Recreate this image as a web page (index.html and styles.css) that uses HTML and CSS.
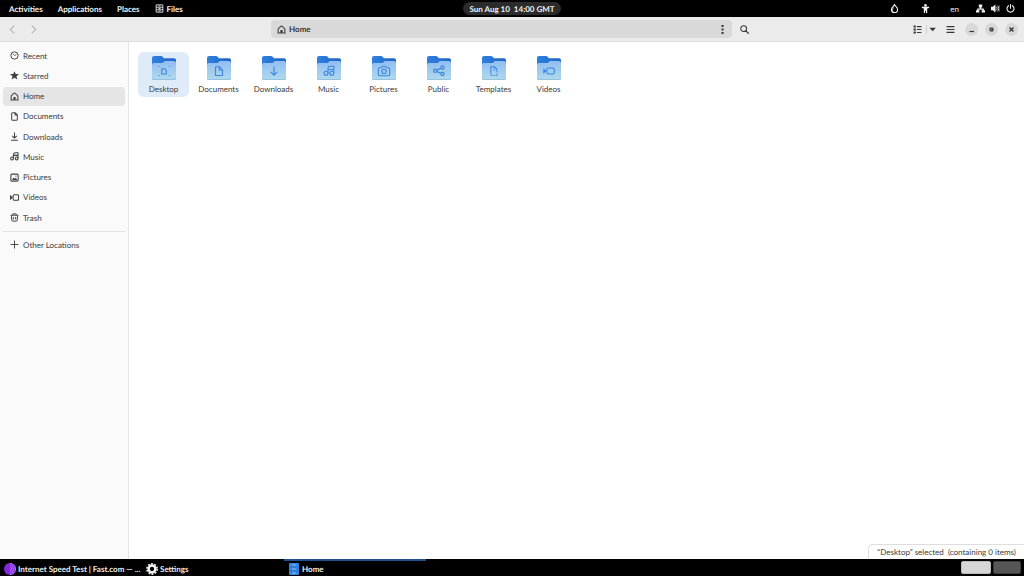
FILE: index.html
```html
<!DOCTYPE html>
<html lang="en">
<head>
<meta charset="utf-8">
<title>Home - Files</title>
<link rel="stylesheet" href="styles.css">
</head>
<body>
<svg class="defs" aria-hidden="true">
  <defs>
    <linearGradient id="folder-front" x1="0" y1="0" x2="0" y2="1">
      <stop offset="0" stop-color="#91bdf3"/><stop offset="1" stop-color="#b0daea"/>
    </linearGradient>
    <linearGradient id="folder-back" x1="0" y1="0" x2="1" y2="0">
      <stop offset="0" stop-color="#2f80e0"/><stop offset="1" stop-color="#1f65c4"/>
    </linearGradient>
    <symbol id="home" viewBox="0 0 16 16"><path d="M2 14.200V7.500q0-.7.500-1.200L7.300 2q.7-.6 1.400 0l4.800 4.300q.5.500.5 1.200v6.700M.8 14.200H6M10 14.200h5.200" fill="none" stroke="currentColor" stroke-width="1.800" stroke-linejoin="round"/><path d="M6 15V10q0-1 1-1h2q1 0 1 1v5z" fill="currentColor"/></symbol>
    <symbol id="doc" viewBox="0 0 16 16"><path d="M3 3q0-1.500 1.500-1.500h5L13 5v8q0 1.500-1.500 1.500h-7Q3 14.500 3 13zM9 2v3.500h3.500" fill="none" stroke="currentColor" stroke-width="1.800" stroke-linejoin="round"/></symbol>
    <symbol id="down" viewBox="0 0 16 16"><path d="M8 1v9M4 6.800l4 4 4-4M2 14.500h12" fill="none" stroke="currentColor" stroke-width="1.800"/></symbol>
    <symbol id="music" viewBox="0 0 16 16"><g fill="none" stroke="currentColor" stroke-width="1.800"><circle cx="3.600" cy="11.500" r="2.500"/><circle cx="11.800" cy="11.500" r="2.500"/><path d="M6.100 11.500V5.500q0-4 4-4h4.200v10M6.100 6h8"/></g></symbol>
    <symbol id="video" viewBox="0 0 16 16"><rect x="5.500" y="3" width="9.700" height="10" rx="2.500" fill="none" stroke="currentColor" stroke-width="1.900"/><path d="M0 3 5 8 0 13z" fill="currentColor"/></symbol>
    <symbol id="folder" viewBox="0 0 24 24"><path d="M0 2Q0 0 2 0h7q1 0 1.600.8L12 2.300h10q2 0 2 2V22H0z" fill="url(#folder-back)"/><path d="M0 9q0-2 2-2h8q1 0 1.600-.7L12 5.500q.5-.5 1.300-.5H22q2 0 2 2v15q0 2-2 2H2q-2 0-2-2z" fill="url(#folder-front)"/><path d="M.3 22q0 1.700 1.700 1.700h20q1.700 0 1.700-1.700" fill="none" stroke="#83afd9" stroke-width=".7"/></symbol>
  </defs>
</svg>

<div class="desktop">
  <header class="topbar">
    <nav class="topbar-menus">
      <button>Activities</button>
      <button>Applications</button>
      <button>Places</button>
      <button class="app-menu"><svg class="icon" viewBox="0 0 16 16"><path d="M2 1.500h12v13H2zM2 5.800h12M2 10.200h12M6 3.500h4M6 8h4M6 12.300h4" fill="none" stroke="currentColor" stroke-width="1.500"/></svg>Files</button>
    </nav>
    <button class="clock"><span>Sun Aug 10</span><span>14:00 GMT</span></button>
    <div class="indicators">
      <button aria-label="Brightness"><svg class="icon" viewBox="0 0 16 16"><path d="M8 1.200c1 2.700 5.500 4.500 5.500 8.500a5.500 5.500 0 0 1-11 0c0-4 4.500-5.800 5.500-8.500z" fill="none" stroke="currentColor" stroke-width="1.900"/><path d="M8 3c-1 3-4 4-4 7q0 2 1.500 3Q5 8 8 3z" fill="currentColor"/></svg></button>
      <button class="access" aria-label="Accessibility"><svg class="icon" viewBox="0 0 16 16"><circle cx="8" cy="2.500" r="2.300" fill="currentColor"/><path d="M1.500 5h13v2L11 8v8H8.800v-4H7.200v4H5V8L1.500 7z" fill="currentColor"/></svg></button>
      <button class="lang">en</button>
      <button class="system" aria-label="System menu">
        <svg class="icon" viewBox="0 0 16 16"><path d="M5 1h6v5H9v2h5v3h2v4h-6v-4h2v-1H4v1h2v4H0v-4h2V8h5V6H5z" fill="currentColor"/></svg>
        <svg class="icon" viewBox="0 0 16 16"><path d="M0 5h3l5-4v14l-5-4H0z" fill="currentColor"/><path d="M10 5q2 3 0 6M12 3q3.500 5 0 10" fill="none" stroke="currentColor" stroke-width="1.500"/><path d="M14 1.500q4 6.500 0 13" fill="none" stroke="#777" stroke-width="1.300"/></svg>
        <svg class="icon" viewBox="0 0 16 16"><path d="M4.500 3a6.300 6.300 0 1 0 7 0M8 1v6.500" fill="none" stroke="currentColor" stroke-width="1.900" stroke-linecap="round"/></svg>
      </button>
    </div>
  </header>

  <main class="window">
    <header class="headerbar">
      <div class="history">
        <button aria-label="Back" disabled><svg class="icon" viewBox="0 0 16 16"><path d="M11 1 4 8l7 7" fill="none" stroke="currentColor" stroke-width="1.900"/></svg></button>
        <button aria-label="Forward" disabled><svg class="icon" viewBox="0 0 16 16"><path d="m5 1 7 7-7 7" fill="none" stroke="currentColor" stroke-width="1.900"/></svg></button>
      </div>
      <div class="pathbar">
        <button class="crumb"><svg class="icon"><use href="#home"/></svg>Home</button>
        <button aria-label="Folder menu"><svg class="icon" viewBox="0 0 16 16"><path d="M6.300 0h3.600v3.600H6.300zM6.300 6.200h3.600v3.600H6.300zM6.300 12.400h3.600V16H6.300z" fill="currentColor"/></svg></button>
      </div>
      <div class="tools">
        <button aria-label="Search"><svg class="icon" viewBox="0 0 16 16"><circle cx="6.500" cy="6.500" r="5.200" fill="none" stroke="currentColor" stroke-width="1.900"/><path d="m10 10 5.300 5.300" stroke="currentColor" stroke-width="2.200"/></svg></button>
        <div class="view-controls">
          <button aria-label="List view"><svg class="icon" viewBox="0 0 16 16"><path d="M1 1h4v3.500H1zM1 6.300h4v3.500H1zM1 11.600h4V15H1zM7 1.800h8v2H7zM7 7h8v2H7zM7 12.300h8v2H7z" fill="currentColor"/></svg></button>
          <button class="view-more" aria-label="View options"><svg class="icon" viewBox="0 0 16 16"><path d="M2.500 5h11.500L8.300 11z" fill="currentColor"/></svg></button>
          <button class="main-menu" aria-label="Main menu"><svg class="icon" viewBox="0 0 16 16"><path d="M1 2.700h14M1 8h14M1 13.300h14" stroke="currentColor" stroke-width="2.200"/></svg></button>
        </div>
        <div class="window-controls">
          <button aria-label="Minimize"><svg viewBox="0 0 13 13"><path d="M4.500 8.500h4.500" stroke="currentColor" stroke-width="1.200"/></svg></button>
          <button aria-label="Restore"><svg viewBox="0 0 13 13"><path d="M5 5h3v3H5z" fill="#777" stroke="currentColor"/></svg></button>
          <button aria-label="Close"><svg viewBox="0 0 13 13"><path d="m4.500 4.500 4 4m0-4-4 4" stroke="currentColor" stroke-width="1.400"/></svg></button>
        </div>
      </div>
    </header>

    <div class="content">
      <nav class="sidebar" aria-label="Places">
        <div class="places">
          <a href="#recent"><svg class="icon" viewBox="0 0 16 16"><circle cx="8" cy="8" r="6.500" fill="none" stroke="currentColor" stroke-width="1.700"/><path d="m5 5 3 3 3.500-2" fill="none" stroke="currentColor" stroke-width="1.400"/></svg>Recent</a>
          <a href="#starred"><svg class="icon" viewBox="0 0 16 16"><path d="m8 .5 2.200 5H16l-4.500 3.800 1.700 6L8 12l-5.200 3.300 1.700-6L0 5.500h5.800z" fill="currentColor"/></svg>Starred</a>
          <a href="#home-folder" class="current" aria-current="page"><svg class="icon"><use href="#home"/></svg>Home</a>
          <a href="#documents"><svg class="icon"><use href="#doc"/></svg>Documents</a>
          <a href="#downloads"><svg class="icon"><use href="#down"/></svg>Downloads</a>
          <a href="#music-folder"><svg class="icon"><use href="#music"/></svg>Music</a>
          <a href="#pictures"><svg class="icon" viewBox="0 0 16 16"><rect x="1.500" y="2" width="13" height="12.500" rx="2" fill="none" stroke="currentColor" stroke-width="1.900"/><path d="m3.500 12.500 3-4.500 2 2 2-1.500 2.500 4z" fill="currentColor"/><circle cx="10.500" cy="5.500" r="1.100" fill="currentColor"/></svg>Pictures</a>
          <a href="#videos"><svg class="icon"><use href="#video"/></svg>Videos</a>
          <a href="#trash"><svg class="icon" viewBox="0 0 16 16"><path d="M1 4h14M5 3.500v-2h6v2M2.500 4l.7 9q.1 1.500 1.600 1.500h6.400q1.500 0 1.600-1.500l.7-9M6 7v4.500M10 7v4.500" fill="none" stroke="currentColor" stroke-width="1.700"/></svg>Trash</a>
        </div>
        <div class="locations">
          <a href="#other"><svg class="icon" viewBox="0 0 16 16"><path d="M8 1v14M1 8h14" stroke="currentColor" stroke-width="1.700"/></svg>Other Locations</a>
        </div>
      </nav>

      <section class="files" aria-label="Home folder">
        <button class="file selected"><svg class="folder" viewBox="0 0 24 24"><use href="#folder"/><g fill="none" stroke="#3b86e0" stroke-width="1.100"><path d="M9.800 12.800h2.700l1.800 1.800V18H9.800z"/><path d="M6.500 10.500h1M17 10.500h1M6.500 19.500h1M17 19.500h1"/></g></svg><span>Desktop</span></button>
        <button class="file"><svg class="folder" viewBox="0 0 24 24"><use href="#folder"/><path d="M8.500 10.800h4l3 3v5.700h-7zM12.300 11v3h3" fill="none" stroke="#3b86e0" stroke-width="1.100" stroke-linejoin="round"/></svg><span>Documents</span></button>
        <button class="file"><svg class="folder" viewBox="0 0 24 24"><use href="#folder"/><path d="M12 10.500v8.700M8.700 15.800l3.300 3.300 3.300-3.300" fill="none" stroke="#3b86e0" stroke-width="1.100"/></svg><span>Downloads</span></button>
        <button class="file"><svg class="folder" viewBox="0 0 24 24"><use href="#folder"/><g fill="none" stroke="#3b86e0" stroke-width="1.100"><circle cx="9" cy="17.200" r="2"/><circle cx="14.800" cy="17.200" r="2"/><path d="M11 17v-4.500q0-2.200 2.200-2.200h3.600V17M11 13.500h5.800"/></g></svg><span>Music</span></button>
        <button class="file"><svg class="folder" viewBox="0 0 24 24"><use href="#folder"/><g fill="none" stroke="#3b86e0" stroke-width="1.100"><path d="M7.500 11.800h2l1-1.500h3l1 1.500h2q1.200 0 1.200 1.200v5.500q0 1.200-1.200 1.200h-9q-1.200 0-1.200-1.200V13q0-1.200 1.200-1.200z"/><circle cx="12" cy="15.500" r="2.200"/></g></svg><span>Pictures</span></button>
        <button class="file"><svg class="folder" viewBox="0 0 24 24"><use href="#folder"/><g fill="none" stroke="#3b86e0" stroke-width="1.200"><circle cx="8.200" cy="14.800" r="1.600"/><circle cx="15.500" cy="11.500" r="1.600"/><circle cx="15.500" cy="18" r="1.600"/><path d="m9.700 14.100 4.300-1.900M9.700 15.500l4.300 1.900"/></g></svg><span>Public</span></button>
        <button class="file"><svg class="folder" viewBox="0 0 24 24"><use href="#folder"/><path d="M8.800 17V10.800h3.700l2.700 2.700" fill="none" stroke="#3b86e0" stroke-width="1.100"/><path d="M12.300 11v3h2.900v5.500H8.800V17" fill="none" stroke="#3b86e0" stroke-width="1.100" stroke-dasharray="1.300 1"/></svg><span>Templates</span></button>
        <button class="file"><svg class="folder" viewBox="0 0 24 24"><use href="#folder"/><rect x="9.800" y="12" width="7.500" height="6" rx="1.500" fill="none" stroke="#3b86e0" stroke-width="1.100"/><path d="m6.300 12 3 3-3 3z" fill="#3b86e0"/></svg><span>Videos</span></button>
      </section>
      <output class="status">“Desktop” selected&nbsp; (containing 0 items)</output>
    </div>
  </main>

  <footer class="taskbar">
    <button class="task"><svg class="task-icon" viewBox="0 0 24 24"><circle cx="12" cy="12" r="12" fill="#8428df"/><path d="M12 1a11 11 0 0 1 0 22M12 5a7 7 0 0 1 0 14M12 9a3 3 0 0 1 0 6" fill="none" stroke="#c18bf5" stroke-width="1.500"/></svg><span>Internet Speed Test | Fast.com — ...</span></button>
    <button class="task"><svg class="task-icon" viewBox="0 0 24 24"><circle cx="12" cy="12" r="6.800" fill="none" stroke="#f5f5f5" stroke-width="5"/><circle cx="12" cy="12" r="10.300" fill="none" stroke="#f5f5f5" stroke-width="3" stroke-dasharray="3.800 2.670"/></svg><span>Settings</span></button>
    <button class="task active"><svg class="task-icon" viewBox="0 0 24 24"><rect x="2" y="0" width="20" height="24" rx="2" fill="#3584e4"/><path d="M3 8h18M3 16h18" stroke="#1d65bd"/><path d="M8.500 4h7M8.500 12h7M8.500 20h7" stroke="#b9d7fa" stroke-width="1.500"/></svg><span>Home</span></button>
    <div class="pager">
      <button class="workspace on" aria-label="Workspace 1"></button>
      <button class="workspace" aria-label="Workspace 2"></button>
    </div>
  </footer>
</div>
</body>
</html>
```
FILE: styles.css
```css
* { box-sizing: border-box; }

body {
  margin: 0;
  font: 8px/12px Lato, sans-serif;
  text-rendering: geometricPrecision;
  color: #404040;
}

button {
  display: flex;
  align-items: center;
  margin: 0;
  padding: 0;
  border: 0;
  background: none;
  color: inherit;
  font: inherit;
  text-rendering: inherit;
  white-space: nowrap;
}

a { color: inherit; text-decoration: none; }

svg { display: block; flex: none; }

.defs { position: absolute; width: 0; height: 0; }

.icon { width: 9px; height: 9px; }

.desktop {
  display: flex;
  flex-direction: column;
  min-height: 100vh;
  background: #000;
}

.topbar {
  display: grid;
  grid-template-columns: 1fr auto 1fr;
  align-items: center;
  height: 17px;
  padding: 0 9px;
  color: #f2f2f2;
  font-weight: 700;
}

.topbar-menus { display: flex; gap: 15px; }
.app-menu { gap: 3px; }

.clock {
  gap: 4px;
  height: 13px;
  padding: 0 6px;
  border-radius: 7px;
  background: #2b2b2b;
}

.indicators { display: flex; justify-content: flex-end; align-items: center; }
.access { margin-left: 22px; }
.lang { margin-left: 20px; font-weight: 400; }
.system { gap: 6px; margin-left: 17px; }

.window {
  display: flex;
  flex: 1;
  flex-direction: column;
  background: #fff;
}

.headerbar {
  display: grid;
  grid-template-columns: 271px 1fr 292px;
  align-items: center;
  height: 25px;
  border-bottom: 1px solid #dcdcdc;
  background: #ebebeb;
  color: #363636;
}

.history { display: flex; gap: 12px; padding-left: 8px; color: #b3b3b3; }

.pathbar {
  display: flex;
  justify-content: space-between;
  align-items: center;
  height: 18px;
  padding: 0 5px 0 6px;
  border-radius: 4px;
  background: #d9d9d9;
}

.crumb { gap: 3px; font-weight: 700; }

.tools { display: flex; align-items: center; padding: 0 6px 0 8px; }

.view-controls { display: flex; align-items: center; margin-left: auto; }
.view-more { margin-left: 4px; padding-left: 1px; border-left: 1px solid #d0d0d0; }
.main-menu { margin-left: 9px; }

.window-controls { display: flex; gap: 7px; margin-left: 10px; }

.window-controls button {
  width: 13px;
  height: 13px;
  border-radius: 50%;
  background: #d8d8d8;
}

.content { position: relative; display: flex; flex: 1; }

.sidebar {
  width: 129px;
  padding: 4px 3px;
  border-right: 1px solid #e4e4e4;
  background: #fafafa;
}

.sidebar a {
  display: flex;
  align-items: center;
  gap: 4px;
  height: 19px;
  padding: 0 7px;
  border-radius: 4px;
}

.sidebar .current { background: #e5e5e5; }

.places {
  display: flex;
  flex-direction: column;
  justify-content: space-between;
  min-height: 181px;
}

.locations {
  margin-top: 4px;
  padding-top: 3px;
  border-top: 1px solid #e2e2e2;
}

.files {
  display: flex;
  flex: 1;
  flex-wrap: wrap;
  align-content: flex-start;
  gap: 4px;
  padding: 10px 9px;
}

.file {
  flex-direction: column;
  gap: 3px;
  width: 51px;
  height: 45px;
  padding-top: 4px;
  border-radius: 6px;
}

.selected { background: #e0ebfa; }

.folder { width: 24px; height: 24px; }

.status {
  position: absolute;
  right: 0;
  bottom: 0;
  padding: 1px 8px;
  border: 1px solid #dedede;
  border-width: 1px 0 0 1px;
  border-radius: 5px 0 0 0;
  background: #fff;
}

.taskbar {
  display: flex;
  align-items: center;
  height: 17px;
  padding-right: 3px;
  color: #eee;
  font-weight: 700;
}

.task {
  gap: 2px;
  width: 142px;
  height: 17px;
  padding: 0 4px;
  border-top: 2px solid transparent;
}

.task.active { border-color: #1f4f8c; }

.task-icon { width: 12px; height: 12px; }

.pager { display: flex; gap: 2px; margin-left: auto; }

.workspace {
  width: 28px;
  height: 13px;
  border: 1px solid #3d3d3d;
  border-radius: 2px;
  background: #565656;
}

.workspace.on { width: 30px; border-color: #bbb; background: #d6d6d6; }
```
